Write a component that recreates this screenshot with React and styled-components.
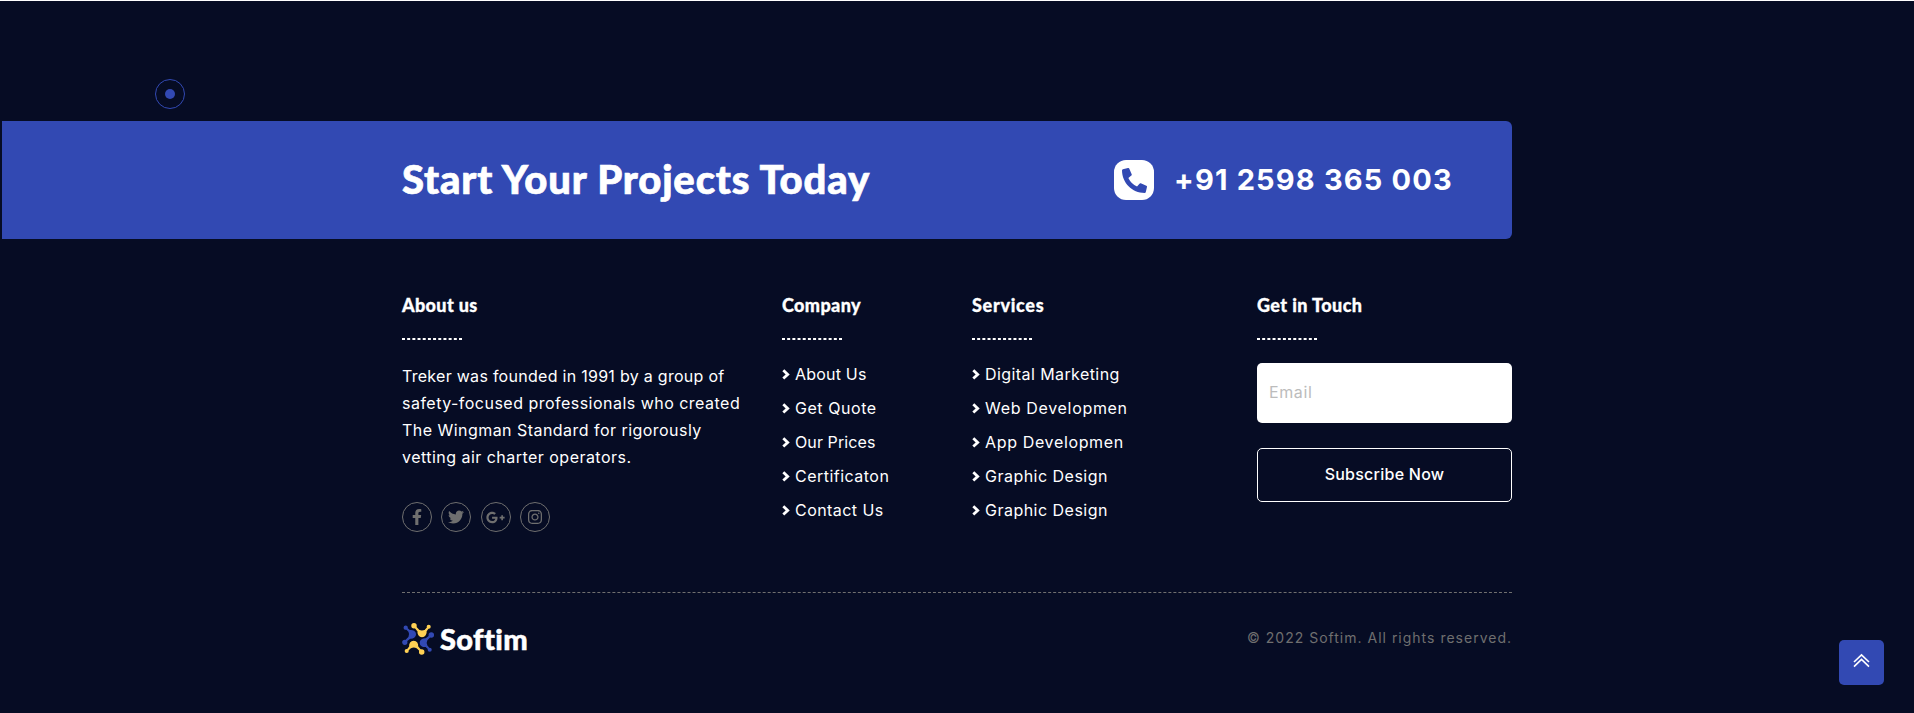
import React from 'react';
import styled, { createGlobalStyle } from 'styled-components';
import { FaFacebookF, FaTwitter, FaGooglePlusG, FaInstagram, FaPhoneAlt } from 'react-icons/fa';

const colors = { night: '#060c24', blue: '#3249b3', white: '#fff', grey: '#6f6f6f', yellow: '#ffd154' };
const heading = '"Lato", "Liberation Sans", sans-serif';
const body = '"Inter", "Liberation Sans", sans-serif';

const GlobalStyle = createGlobalStyle`
  *, *::before, *::after { box-sizing: border-box; }
  body { margin: 0; background: ${colors.night}; font: 16px/27px ${body}; color: ${colors.white}; }
  h2, h3, p, ul { margin: 0; padding: 0; }
`;

const Page = styled.footer`
  position: relative;
  height: 713px;
  overflow: hidden;
  border-top: 1px solid ${colors.white};
  padding-top: 120px;
`;

const Tracked = styled.span`
  letter-spacing: ${(p) => p.$tracking || 0}px;
  white-space: nowrap;
`;

const TextLine = styled(Tracked)`
  display: block;
`;

const Banner = styled.section`
  display: flex;
  align-items: center;
  justify-content: space-between;
  width: 1510px;
  height: 118px;
  margin-left: 2px;
  padding: 0 59px 0 400px;
  border-radius: 0 6px 6px 0;
  background: ${colors.blue};
`;

const BannerTitle = styled.h2`
  margin-bottom: 2px;
  font: 900 40px/48px ${heading};
  -webkit-text-stroke: 0.7px ${colors.white};
`;

const Phone = styled.div`
  display: flex;
  align-items: center;
  gap: 20px;
`;

const PhoneBadge = styled.span`
  display: flex;
  align-items: center;
  justify-content: center;
  width: 40px;
  height: 40px;
  border-radius: 12px;
  background: ${colors.white};
  color: ${colors.blue};
  font-size: 25px;
`;

const PhoneNumber = styled.span`
  margin-bottom: 1px;
  font: 700 29px/36px ${body};
`;

const Container = styled.div`
  width: 1110px;
  margin: 55px 0 0 402px;
`;

const Columns = styled.div`
  display: grid;
  grid-template-columns: 380px 190px 285px 255px;
  padding-bottom: 60px;
  border-bottom: 1px dashed ${colors.grey};
`;

const ColumnTitle = styled.h3`
  font: 900 18px/22px ${heading};
  -webkit-text-stroke: 0.3px ${colors.white};

  &::after {
    content: '';
    display: block;
    width: 60px;
    margin-top: 22px;
    border: 1px dashed ${colors.white};
  }
`;

const Paragraph = styled.p`
  margin-top: 23px;
`;

const Socials = styled.div`
  display: flex;
  gap: 9.3px;
  margin-top: 31px;
`;

const SocialLink = styled.a`
  display: flex;
  align-items: center;
  justify-content: center;
  width: 30px;
  height: 30px;
  border: 1px solid ${colors.grey};
  border-radius: 50%;
  color: ${colors.grey};
  font-size: ${(p) => p.$size}px;

  svg { flex: none; }
`;

const LinkList = styled.ul`
  margin-top: 17px;
  list-style: none;
`;

const LinkItem = styled.li`
  display: flex;
  align-items: center;
  gap: 5px;
  height: 34px;
  line-height: 34px;
`;

const Form = styled.form`
  display: flex;
  flex-direction: column;
  gap: 25px;
  margin-top: 23px;
`;

const EmailInput = styled.input`
  width: 100%;
  height: 60px;
  padding: 0 12px 2px;
  border: 0;
  border-radius: 5px;
  background: ${colors.white};
  font: 400 16px ${body};
  letter-spacing: 0.6px;

  &::placeholder { color: #bcbcbc; opacity: 1; }
`;

const SubmitButton = styled.button`
  height: 54px;
  padding: 0 0 2px;
  border: 1px solid ${colors.white};
  border-radius: 5px;
  background: transparent;
  color: ${colors.white};
  font: 500 16px ${body};
`;

const BottomBar = styled.div`
  display: flex;
  align-items: center;
  justify-content: space-between;
  padding-top: 29px;
`;

const Logo = styled.div`
  display: flex;
  align-items: center;
  gap: 5px;
  font: 900 29px/34px ${heading};
  -webkit-text-stroke: 0.5px ${colors.white};
`;

const Mark = styled.svg`
  -webkit-text-stroke: 0;
`;

const Copyright = styled.p`
  margin-bottom: 2px;
  color: ${colors.grey};
  font-size: 14px;
  line-height: 24px;
`;

const CursorRing = styled.div`
  position: absolute;
  left: 155px;
  top: 78px;
  display: flex;
  align-items: center;
  justify-content: center;
  width: 30px;
  height: 30px;
  border: 1px solid ${colors.blue};
  border-radius: 50%;

  &::after {
    content: '';
    width: 10px;
    height: 10px;
    border-radius: 50%;
    background: ${colors.blue};
  }
`;

const BackToTop = styled.a`
  position: absolute;
  right: 30px;
  bottom: 28px;
  display: flex;
  align-items: center;
  justify-content: center;
  width: 45px;
  height: 45px;
  padding-bottom: 4px;
  border-radius: 5px;
  background: ${colors.blue};
`;

const Chevron = () => (
  <svg width="8" height="11" viewBox="0 0 8 11" fill="none" stroke="#fff" strokeWidth="2.8">
    <path d="M1.3 1.2 5.7 5.4 1.3 9.6" />
  </svg>
);

const DoubleUp = () => (
  <svg width="17" height="15" viewBox="0 0 17 15" fill="none" stroke="#fff" strokeWidth="1.6">
    <path d="M1 9 8.5 1.8 16 9M1 13.6 8.5 6.4 16 13.6" />
  </svg>
);

const LogoMark = () => (
  <Mark width="33" height="34" viewBox="0 0 33 34" strokeWidth="1.7" strokeLinejoin="round">
    <g fill={colors.yellow} stroke={colors.yellow}>
      <path d="M12 3.7 16.4 9.2C15.8 12 17.5 14.3 20 14.3S24.2 12 23.8 9L26.7 4.7 23.4 8.4C21.5 9.4 18.5 9.4 16.8 8.6Z" />
      <circle cx="12" cy="3.7" r="1.9" />
      <circle cx="26.7" cy="4.7" r="1.2" />
      <path d="M4.7 29 8 24.8C7.6 21.5 9.2 19.5 11.7 19.5S15.7 21.5 15.3 24.6L19.7 30 15 25.4C13 24.4 10.5 24.5 8.6 25.4Z" />
      <circle cx="4.7" cy="29" r="1.2" />
      <circle cx="19.7" cy="30" r="1.9" />
    </g>
    <g fill={colors.blue} stroke={colors.blue}>
      <path d="M3.7 5.7 7.5 8.8C11 8.4 13.2 9.8 13.2 12.3S11 16.2 8 15.9L2.3 20.3 7.2 15.3C8.2 13.3 8.1 11 7.2 9.3Z" />
      <circle cx="3.7" cy="5.7" r="1.3" />
      <circle cx="2.8" cy="20.3" r="1.8" />
      <path d="M29.3 13 24 17.2C20.8 17 18.5 18.4 18.5 20.8S20.7 24.6 24 24.2L27.7 27.7 24.6 23.7C23.6 21.7 23.7 19.5 24.6 17.8Z" />
      <circle cx="29.3" cy="13" r="1.9" />
      <circle cx="27.7" cy="27.7" r="1.2" />
    </g>
  </Mark>
);

const about = [
  ['Treker was founded in 1991 by a group of', 0.28],
  ['safety-focused professionals who created', 0.48],
  ['The Wingman Standard for rigorously', 0.46],
  ['vetting air charter operators.', 0.47],
];
const company = [
  ['About Us', 0.2],
  ['Get Quote', 0.55],
  ['Our Prices', 0.1],
  ['Certificaton', 0.48],
  ['Contact Us', 0.45],
];
const services = [
  ['Digital Marketing', 0.42],
  ['Web Developmen', 0.68],
  ['App Developmen', 0.65],
  ['Graphic Design', 0.48],
  ['Graphic Design', 0.48],
];
const socials = [[FaFacebookF, 16], [FaTwitter, 16], [FaGooglePlusG, 19], [FaInstagram, 16]];

const Links = ({ items }) => (
  <LinkList>
    {items.map(([label, tracking], i) => (
      <LinkItem key={i}>
        <Chevron />
        <Tracked $tracking={tracking}>{label}</Tracked>
      </LinkItem>
    ))}
  </LinkList>
);

export default function App() {
  return (
    <Page>
      <GlobalStyle />
      <CursorRing />
      <Banner>
        <BannerTitle><Tracked $tracking={0.83}>Start Your Projects Today</Tracked></BannerTitle>
        <Phone>
          <PhoneBadge><FaPhoneAlt /></PhoneBadge>
          <PhoneNumber><Tracked $tracking={1.18}>+91 2598 365 003</Tracked></PhoneNumber>
        </Phone>
      </Banner>
      <Container>
        <Columns>
          <div>
            <ColumnTitle><Tracked $tracking={0.35}>About us</Tracked></ColumnTitle>
            <Paragraph>
              {about.map(([line, tracking]) => (
                <TextLine key={line} $tracking={tracking}>{line}</TextLine>
              ))}
            </Paragraph>
            <Socials>
              {socials.map(([Icon, size], i) => (
                <SocialLink key={i} $size={size}><Icon /></SocialLink>
              ))}
            </Socials>
          </div>
          <div>
            <ColumnTitle><Tracked $tracking={0.4}>Company</Tracked></ColumnTitle>
            <Links items={company} />
          </div>
          <div>
            <ColumnTitle><Tracked $tracking={0.7}>Services</Tracked></ColumnTitle>
            <Links items={services} />
          </div>
          <div>
            <ColumnTitle><Tracked $tracking={0.42}>Get in Touch</Tracked></ColumnTitle>
            <Form>
              <EmailInput placeholder="Email" />
              <SubmitButton type="button"><Tracked $tracking={0.25}>Subscribe Now</Tracked></SubmitButton>
            </Form>
          </div>
        </Columns>
        <BottomBar>
          <Logo><LogoMark /><Tracked $tracking={0.4}>Softim</Tracked></Logo>
          <Copyright><Tracked $tracking={1}>© 2022 Softim. All rights reserved.</Tracked></Copyright>
        </BottomBar>
      </Container>
      <BackToTop><DoubleUp /></BackToTop>
    </Page>
  );
}
